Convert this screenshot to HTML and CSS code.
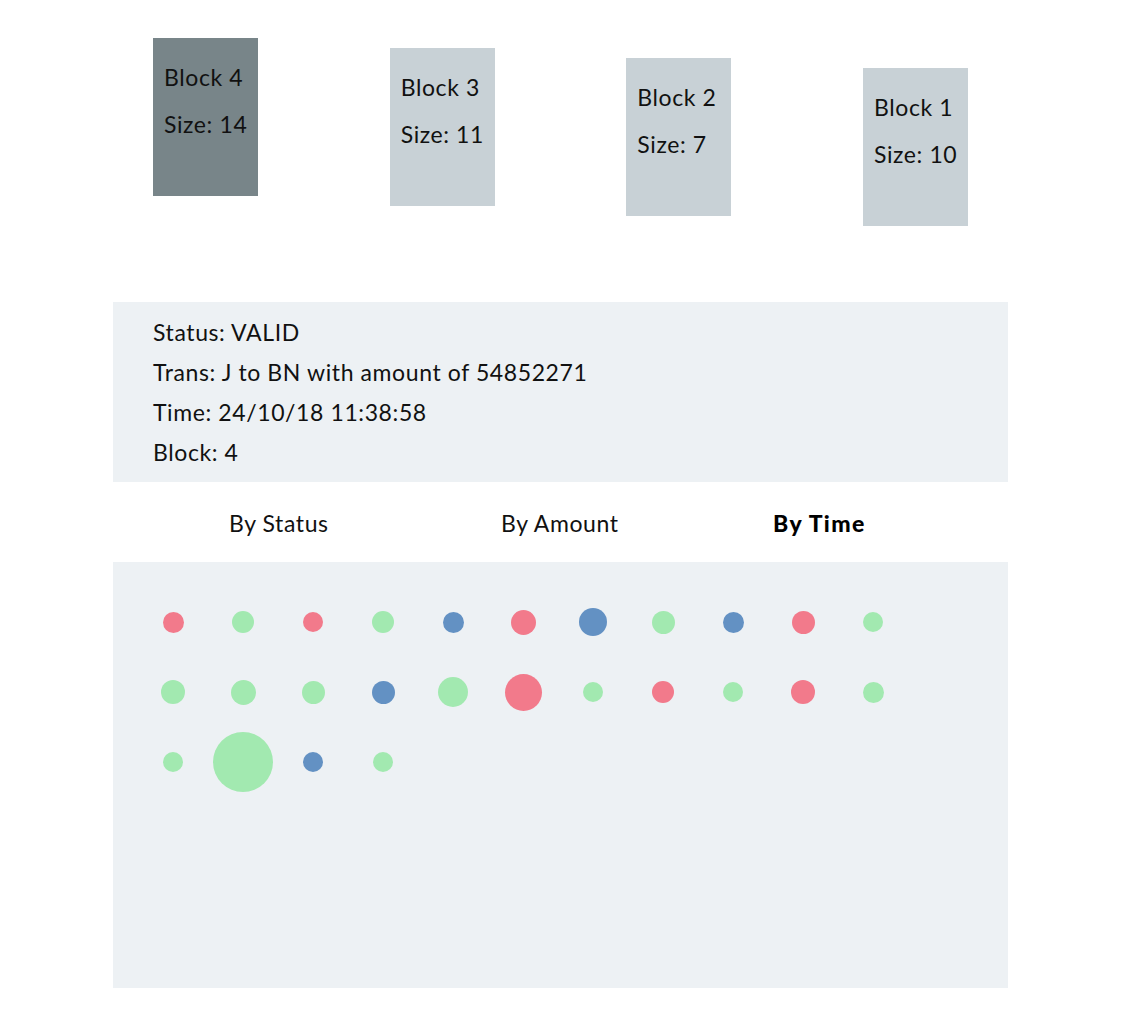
FILE: index.html
```html
<!DOCTYPE html>
<html>
<head>
<meta charset="utf-8">
<link rel="stylesheet" href="styles.css">
</head>
<body>
<div class="page">
  <div class="chain">
    <div class="block active s0"><div>Block 4</div><div>Size: 14</div></div>
    <div class="block s1"><div>Block 3</div><div>Size: 11</div></div>
    <div class="block s2"><div>Block 2</div><div>Size: 7</div></div>
    <div class="block s3"><div>Block 1</div><div>Size: 10</div></div>
  </div>
  <div class="info">
    <div class="line">Status: VALID</div>
    <div class="line">Trans: J to BN with amount of 54852271</div>
    <div class="line">Time: 24/10/18 11:38:58</div>
    <div class="line">Block: 4</div>
  </div>
  <div class="tabs">
    <div class="tab">By Status</div>
    <div class="tab">By Amount</div>
    <div class="tab selected">By Time</div>
  </div>
  <div class="dots">
    <div class="cell"><span class="dot red" style="width:21px;height:21px"></span></div>
    <div class="cell"><span class="dot green" style="width:22px;height:22px"></span></div>
    <div class="cell"><span class="dot red" style="width:20px;height:20px"></span></div>
    <div class="cell"><span class="dot green" style="width:22px;height:22px"></span></div>
    <div class="cell"><span class="dot blue" style="width:21px;height:21px"></span></div>
    <div class="cell"><span class="dot red" style="width:25px;height:25px"></span></div>
    <div class="cell"><span class="dot blue" style="width:28px;height:28px"></span></div>
    <div class="cell"><span class="dot green" style="width:23px;height:23px"></span></div>
    <div class="cell"><span class="dot blue" style="width:21px;height:21px"></span></div>
    <div class="cell"><span class="dot red" style="width:23px;height:23px"></span></div>
    <div class="cell"><span class="dot green" style="width:20px;height:20px"></span></div>

    <div class="cell"><span class="dot green" style="width:24px;height:24px"></span></div>
    <div class="cell"><span class="dot green" style="width:25px;height:25px"></span></div>
    <div class="cell"><span class="dot green" style="width:23px;height:23px"></span></div>
    <div class="cell"><span class="dot blue" style="width:23px;height:23px"></span></div>
    <div class="cell"><span class="dot green" style="width:30px;height:30px"></span></div>
    <div class="cell"><span class="dot red" style="width:37px;height:37px"></span></div>
    <div class="cell"><span class="dot green" style="width:20px;height:20px"></span></div>
    <div class="cell"><span class="dot red" style="width:22px;height:22px"></span></div>
    <div class="cell"><span class="dot green" style="width:20px;height:20px"></span></div>
    <div class="cell"><span class="dot red" style="width:24px;height:24px"></span></div>
    <div class="cell"><span class="dot green" style="width:21px;height:21px"></span></div>

    <div class="cell"><span class="dot green" style="width:20px;height:20px"></span></div>
    <div class="cell"><span class="dot green" style="width:60px;height:60px"></span></div>
    <div class="cell"><span class="dot blue" style="width:20px;height:20px"></span></div>
    <div class="cell"><span class="dot green" style="width:20px;height:20px"></span></div>
  </div>
</div>
</body>
</html>
```
FILE: styles.css
```css
html, body {
  margin: 0;
  padding: 0;
  background: #ffffff;
}
body {
  font-family: Lato, "Noto Sans", sans-serif;
  color: #111111;
  letter-spacing: 0.6px;
}
.page {
  margin-left: 113px;
  width: 895px;
}
.chain {
  height: 264px;
  padding: 38px 40px 0;
  display: flex;
  justify-content: space-between;
  align-items: flex-start;
}
.block {
  width: 105px;
  height: 158px;
  box-sizing: border-box;
  padding: 16px 0 0 11px;
  background: #c8d1d6;
  font-size: 23px;
}
.block div {
  line-height: 47px;
  height: 47px;
}
.block.active {
  background: #788589;
}
.s0 { margin-top: 0; }
.s1 { margin-top: 10px; }
.s2 { margin-top: 20px; }
.s3 { margin-top: 30px; }
.info {
  background: #edf1f4;
  height: 180px;
  box-sizing: border-box;
  padding: 10px 40px 0;
  font-size: 23px;
}
.line {
  height: 40px;
  line-height: 40px;
}
.tabs {
  height: 80px;
  display: flex;
  align-items: center;
  padding-left: 116px;
  padding-top: 2px;
  box-sizing: border-box;
  font-size: 23px;
}
.tab {
  width: 272px;
  flex-shrink: 0;
}
.tab.selected {
  font-weight: 900;
  letter-spacing: 1.4px;
  color: #000000;
}
.dots {
  background: #edf1f4;
  height: 426px;
  box-sizing: border-box;
  padding: 25px 25px;
  display: grid;
  grid-template-columns: repeat(11, 70px);
  grid-auto-rows: 70px;
  align-content: start;
}
.cell {
  display: flex;
  align-items: center;
  justify-content: center;
}
.dot {
  display: block;
  border-radius: 50%;
}
.red { background: #f27a8b; }
.green { background: #a2e9b0; }
.blue { background: #6391c3; }
```
